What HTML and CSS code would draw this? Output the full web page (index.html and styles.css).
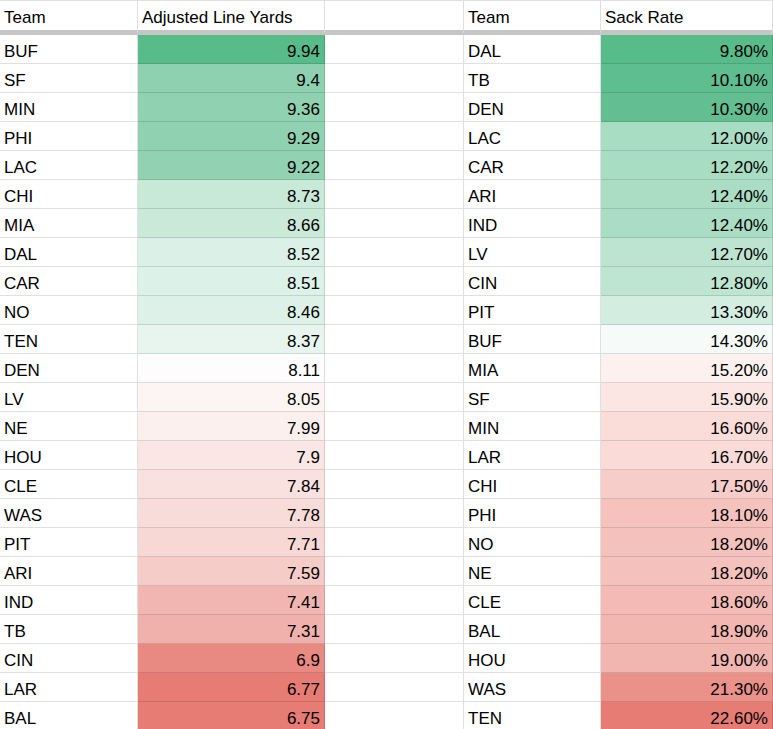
FILE: index.html
```html
<!DOCTYPE html>
<html lang="en">
<head>
<meta charset="utf-8">
<title>Adjusted Line Yards vs Sack Rate</title>
<link rel="stylesheet" href="styles.css">
</head>
<body>
<div class="sheet">
  <div class="c h">Team</div><div class="c h">Adjusted Line Yards</div><div class="c h"></div><div class="c h">Team</div><div class="c h">Sack Rate</div>

  <div class="c">BUF</div><div class="c n" style="background:#57bb8a">9.94</div><div class="c"></div><div class="c">DAL</div><div class="c n" style="background:#57bb8a">9.80%</div>
  <div class="c">SF</div><div class="c n" style="background:#8ed0af">9.4</div><div class="c"></div><div class="c">TB</div><div class="c n" style="background:#5fbe8f">10.10%</div>
  <div class="c">MIN</div><div class="c n" style="background:#8fd1b0">9.36</div><div class="c"></div><div class="c">DEN</div><div class="c n" style="background:#63bf92">10.30%</div>
  <div class="c">PHI</div><div class="c n" style="background:#90d1b1">9.29</div><div class="c"></div><div class="c">LAC</div><div class="c n" style="background:#a8dcc3">12.00%</div>
  <div class="c">LAC</div><div class="c n" style="background:#92d2b2">9.22</div><div class="c"></div><div class="c">CAR</div><div class="c n" style="background:#a9ddc3">12.20%</div>
  <div class="c">CHI</div><div class="c n" style="background:#c8e8d8">8.73</div><div class="c"></div><div class="c">ARI</div><div class="c n" style="background:#aaddc4">12.40%</div>
  <div class="c">MIA</div><div class="c n" style="background:#cae9d9">8.66</div><div class="c"></div><div class="c">IND</div><div class="c n" style="background:#aaddc4">12.40%</div>
  <div class="c">DAL</div><div class="c n" style="background:#dbf0e6">8.52</div><div class="c"></div><div class="c">LV</div><div class="c n" style="background:#bde4d1">12.70%</div>
  <div class="c">CAR</div><div class="c n" style="background:#dcf1e7">8.51</div><div class="c"></div><div class="c">CIN</div><div class="c n" style="background:#bee5d2">12.80%</div>
  <div class="c">NO</div><div class="c n" style="background:#ddf1e8">8.46</div><div class="c"></div><div class="c">PIT</div><div class="c n" style="background:#d3eee1">13.30%</div>
  <div class="c">TEN</div><div class="c n" style="background:#e7f5ee">8.37</div><div class="c"></div><div class="c">BUF</div><div class="c n" style="background:#f6fbf9">14.30%</div>
  <div class="c">DEN</div><div class="c n" style="background:#fefdfd">8.11</div><div class="c"></div><div class="c">MIA</div><div class="c n" style="background:#fdf1f0">15.20%</div>
  <div class="c">LV</div><div class="c n" style="background:#fdf5f4">8.05</div><div class="c"></div><div class="c">SF</div><div class="c n" style="background:#fce6e4">15.90%</div>
  <div class="c">NE</div><div class="c n" style="background:#fcf0ef">7.99</div><div class="c"></div><div class="c">MIN</div><div class="c n" style="background:#fadcd9">16.60%</div>
  <div class="c">HOU</div><div class="c n" style="background:#fae6e4">7.9</div><div class="c"></div><div class="c">LAR</div><div class="c n" style="background:#fadbd8">16.70%</div>
  <div class="c">CLE</div><div class="c n" style="background:#f9e1df">7.84</div><div class="c"></div><div class="c">CHI</div><div class="c n" style="background:#f7cdc9">17.50%</div>
  <div class="c">WAS</div><div class="c n" style="background:#f8dcd9">7.78</div><div class="c"></div><div class="c">PHI</div><div class="c n" style="background:#f5c2bd">18.10%</div>
  <div class="c">PIT</div><div class="c n" style="background:#f7d8d5">7.71</div><div class="c"></div><div class="c">NO</div><div class="c n" style="background:#f5c1bc">18.20%</div>
  <div class="c">ARI</div><div class="c n" style="background:#f5ccc8">7.59</div><div class="c"></div><div class="c">NE</div><div class="c n" style="background:#f5c1bc">18.20%</div>
  <div class="c">IND</div><div class="c n" style="background:#f1b6b1">7.41</div><div class="c"></div><div class="c">CLE</div><div class="c n" style="background:#f4bbb6">18.60%</div>
  <div class="c">TB</div><div class="c n" style="background:#f0b0ab">7.31</div><div class="c"></div><div class="c">BAL</div><div class="c n" style="background:#f3b7b2">18.90%</div>
  <div class="c">CIN</div><div class="c n" style="background:#e88a82">6.9</div><div class="c"></div><div class="c">HOU</div><div class="c n" style="background:#f2b6b1">19.00%</div>
  <div class="c">LAR</div><div class="c n" style="background:#e67c74">6.77</div><div class="c"></div><div class="c">WAS</div><div class="c n" style="background:#ea9189">21.30%</div>
  <div class="c">BAL</div><div class="c n" style="background:#e67c73">6.75</div><div class="c"></div><div class="c">TEN</div><div class="c n" style="background:#e67c73">22.60%</div>
</div>
</body>
</html>
```
FILE: styles.css
```css
html, body {
  margin: 0;
  padding: 0;
  background: #ffffff;
}

body {
  overflow: hidden;
}

.sheet {
  display: grid;
  grid-template-columns: 138px 187px 139px 137px 172px;
  grid-auto-rows: 29px;
  width: 773px;
  font-family: "Liberation Sans", Arial, sans-serif;
  font-size: 17px;
  color: #000000;
}

.c {
  box-sizing: border-box;
  display: flex;
  align-items: flex-end;
  padding: 0 4px 2px 4px;
  line-height: 19px;
  border-right: 1px solid rgba(0, 0, 0, 0.12);
  border-bottom: 1px solid rgba(0, 0, 0, 0.12);
  white-space: nowrap;
  overflow: hidden;
}

.h {
  height: 35px;
  border-top: 1px solid rgba(0, 0, 0, 0.12);
  border-bottom: 5px solid #c6c6c6;
  padding-bottom: 3px;
}

.sheet > .h {
  grid-row: 1;
}

.sheet {
  grid-template-rows: 35px;
}

.n {
  justify-content: flex-end;
}
```
